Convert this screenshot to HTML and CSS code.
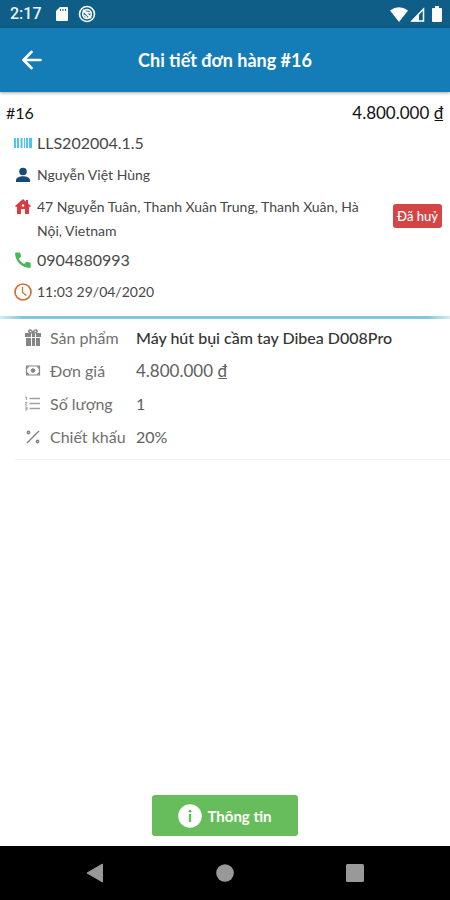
FILE: index.html
```html
<!DOCTYPE html>
<html lang="vi">
<head>
<meta charset="utf-8">
<meta name="viewport" content="width=device-width, initial-scale=1">
<title>Chi tiết đơn hàng #16</title>
<link rel="stylesheet" href="styles.css">
</head>
<body>
<div class="statusbar">
  <span class="clock">2:17</span>
  <svg class="sd" width="12" height="14" viewBox="0 0 12 14" aria-hidden="true"><path fill="#fff" d="M4 0h7a1 1 0 0 1 1 1v12a1 1 0 0 1-1 1H1a1 1 0 0 1-1-1V4z"/><path stroke="#0f5e88" d="M4.500 2v2M7 2v2M9.500 2v2"/></svg>
  <svg width="18" height="18" viewBox="0 0 18 18" fill="none" stroke="#fff" aria-hidden="true"><circle cx="9" cy="9" r="7.500" stroke-width="1.600"/><circle cx="9" cy="9" r="4.300" stroke-width="1.700"/><path stroke-width="2" d="M5 5l8 8"/><path stroke-width="1.500" d="M8 7l4 1M6 10l3 2"/></svg>
  <span class="signals">
    <svg width="18" height="15" viewBox="0 0 18 15" aria-hidden="true"><path fill="#fff" d="M0 3.500Q9-3 18 3.500L9 15z"/></svg>
    <svg width="15" height="15" viewBox="0 0 15 15" aria-hidden="true"><path fill="none" stroke="#fff" stroke-width="1.500" d="M13.500 2v12H2z"/><path fill="#fff" d="M1 14.500L9 6v8.500z"/></svg>
    <svg class="battery" width="10" height="16" viewBox="0 0 10 16" aria-hidden="true"><path fill="#fff" d="M3 0h4v2h2a1 1 0 0 1 1 1v12a1 1 0 0 1-1 1H1a1 1 0 0 1-1-1V3a1 1 0 0 1 1-1h2z"/></svg>
  </span>
</div>
<header class="appbar">
  <button class="back" type="button" aria-label="Quay lại"><svg width="20" height="20" viewBox="0 0 20 20" fill="none" stroke="#fff" stroke-width="2.600" stroke-linecap="round" stroke-linejoin="round"><path d="M18.500 10H2M9.500 2L1.500 10l8 8"/></svg></button>
  <h1>Chi tiết đơn hàng #16</h1>
</header>
<main>
  <section class="order">
    <div class="summary"><span>#16</span><span class="price">4.800.000 ₫</span></div>
    <div class="customer">
      <ul class="info">
        <li class="number"><svg viewBox="0 0 18 18" fill="#4fc3ef" aria-hidden="true"><path d="M0 4h2v10H0zM3 4h2v10H3zM6.500 4h2v10h-2zM10 4h1v10h-1zM12 4h2v10h-2zM15 4h3v10h-3z"/></svg><span>LLS202004.1.5</span></li>
        <li><svg viewBox="0 0 18 18" fill="#174a76" aria-hidden="true"><circle cx="9" cy="5.500" r="3.800"/><path d="M2 16v-2c0-2.400 4-3.800 7-3.800s7 1.400 7 3.800v2z"/></svg><span>Nguyễn Việt Hùng</span></li>
        <li><svg viewBox="0 0 18 18" fill="#d93c40" aria-hidden="true"><path d="M9 1l3 2.700V2h2v3.500L17 8l-1 1.200-1-.8V16h-4v-5H7v5H3V8.400l-1 .8L1 8z"/><circle cx="9" cy="7.500" r="1.200" fill="#fff"/></svg><span>47 Nguyễn Tuân, Thanh Xuân Trung, Thanh Xuân, Hà Nội, Vietnam</span></li>
        <li class="number"><svg viewBox="0 0 18 18" fill="#46b854" aria-hidden="true"><path d="M2 1.500h3.500c.5 0 .8.300.9.800l.6 2.800c.1.400 0 .7-.3.900L4.900 7.800c1.200 2.300 3 4.100 5.300 5.300l1.800-1.800c.3-.3.600-.4.900-.3l3 .6c.5.100.8.500.8.900V16c0 .5-.4.900-.9.900C7.900 16.900 1.100 10.200 1.100 2.400c0-.5.4-.9.900-.9z"/></svg><span>0904880993</span></li>
        <li><svg viewBox="0 0 18 18" fill="none" stroke="#cf7434" aria-hidden="true"><circle cx="9" cy="9" r="8" stroke-width="1.700"/><path stroke-width="1.300" d="M8.500 4v5.500l4 3"/></svg><span>11:03 29/04/2020</span></li>
      </ul>
      <span class="badge">Đã huỷ</span>
    </div>
  </section>
  <div class="divider"></div>
  <dl class="product">
    <div><dt><svg viewBox="0 0 18 18" fill="#858585" aria-hidden="true"><path d="M1 4h6v4H1zM8 4h3v4H8zM12 4h5v4h-5zM2 9h5v8H2zM8 9h3v8H8zM12 9h4v8h-4z"/><path fill="none" stroke="#858585" stroke-width="1.500" d="M9 4C6 4 4 3 5 1.700S8 1 9 4c1-3 3-3.500 4-2.300S12 4 9 4z"/></svg>Sản phẩm</dt><dd class="name">Máy hút bụi cầm tay Dibea D008Pro</dd></div>
    <div><dt><svg viewBox="0 0 18 18" fill="none" stroke="#858585" aria-hidden="true"><path stroke-width="1.200" d="M2.500 4h13v9h-13zM3 6.500L5 4M13 4l2 2.500M3 10.500L5 13M13 13l2-2.500"/><circle cx="9" cy="8.500" r="1.800" fill="#858585"/></svg>Đơn giá</dt><dd class="price">4.800.000 ₫</dd></div>
    <div><dt><svg viewBox="0 0 18 18" fill="none" stroke="#a0a0a0" stroke-width="1.400" aria-hidden="true"><path d="M5.500 3.500H16M5.500 8.500H16M5.500 13.500H16"/><path stroke-width="1" d="M1 2h1.500v3M1 7.500h2l-2 2.500h2M1 12h2v3H1M1.500 13.500H3"/></svg>Số lượng</dt><dd>1</dd></div>
    <div><dt><svg viewBox="0 0 18 18" fill="none" stroke="#858585" stroke-width="1.500" aria-hidden="true"><path d="M3 15L15 3"/><circle cx="4.500" cy="4.500" r="1.200"/><circle cx="13.500" cy="13.500" r="1.200"/></svg>Chiết khấu</dt><dd>20%</dd></div>
  </dl>
</main>
<footer class="actions">
  <button class="details" type="button"><svg width="24" height="24" viewBox="0 0 24 24" aria-hidden="true"><circle cx="12" cy="12" r="11.800" fill="#fff"/><circle cx="12" cy="7.200" r="1.400" fill="#67bd5c"/><path fill="#67bd5c" d="M10.800 10h2.400v8h-2.400z"/></svg>Thông tin</button>
</footer>
<nav class="navbar" aria-label="Hệ thống">
  <button type="button" aria-label="Trở về"><svg width="20" height="20" viewBox="0 0 20 20"><path fill="#999" stroke="#999" stroke-width="1" stroke-linejoin="round" d="M2 10l15.500-9v18z"/></svg></button>
  <button type="button" aria-label="Màn hình chính"><svg width="20" height="20" viewBox="0 0 20 20"><circle cx="10" cy="10" r="8.800" fill="#999"/></svg></button>
  <button type="button" aria-label="Gần đây"><svg width="20" height="20" viewBox="0 0 20 20"><rect x="1" y="1" width="18" height="18" rx="1.500" fill="#999"/></svg></button>
</nav>
</body>
</html>
```
FILE: styles.css
```css
* { box-sizing: border-box; }
body {
  margin: 0;
  min-height: 100vh;
  display: flex;
  flex-direction: column;
  background: #fff;
  color: #484848;
  font: 16px/24px Lato, "Open Sans", sans-serif;
}
button { margin: 0; padding: 0; border: 0; background: none; font: inherit; color: inherit; cursor: pointer; }
svg { display: block; flex: none; }

.statusbar {
  height: 28px;
  padding: 0 8px 0 10px;
  display: flex;
  align-items: center;
  gap: 10px;
  background: #0f5e88;
  color: #eef5f9;
}
.clock { margin-right: 4px; font: 500 16px/28px Roboto, sans-serif; }
.signals { margin-left: auto; display: flex; align-items: center; gap: 2px; }
.battery { margin-left: 5px; }

.appbar {
  height: 64px;
  padding: 0 22px;
  display: grid;
  grid-template-columns: 20px 1fr 20px;
  align-items: center;
  background: #147cb7;
  color: #fff;
  box-shadow: 0 1px 3px rgba(0, 0, 0, .35);
}
h1 { margin: 0; text-align: center; font-size: 18px; font-weight: 700; line-height: 24px; }

.price { font-size: 17px; }
.summary { display: flex; justify-content: space-between; padding: 9px 6px 2px; color: #111; }
.customer { display: flex; align-items: center; justify-content: space-between; padding-right: 8px; }
.info { flex: 1; margin: 0; padding: 0 0 0 14px; list-style: none; font-size: 14px; }
.info li { display: flex; align-items: flex-start; gap: 5px; min-height: 32px; padding: 4px 0 1px; }
.info svg { width: 18px; height: 18px; margin-top: 3px; }
.info span { max-width: 340px; }
.info .number { font-size: 16px; }
.badge { margin-bottom: 3px; padding: 0 4px; border-radius: 3px; background: #d64545; color: #fff; font-size: 13px; font-weight: 500; }

.divider { height: 3px; margin-top: 8px; background: linear-gradient(90deg, #d3ebf5, #86c5df 5%, #86c5df 95%, #d3ebf5); }

.product { margin: 0 0 0 15px; padding: 2px 0 6px 9px; border-bottom: 1px solid #f2f2f2; }
.product div { display: grid; grid-template-columns: 112px 1fr; align-items: center; min-height: 33px; }
.product dt { display: flex; align-items: center; gap: 8px; color: #707070; white-space: nowrap; }
.product dt svg { width: 18px; height: 18px; }
.product dd { margin: 0; color: #606060; }
.product .name { color: #333; font-weight: 500; }

.actions { margin-top: auto; padding: 10px; display: flex; justify-content: center; }
.details {
  min-width: 146px;
  height: 41px;
  display: flex;
  align-items: center;
  justify-content: center;
  gap: 5px;
  border-radius: 3px;
  background: #67bd5c;
  color: #fff;
  font-size: 15px;
  font-weight: 700;
}

.navbar { height: 54px; padding: 0 85px; display: flex; align-items: center; justify-content: space-between; background: #000; }
```
